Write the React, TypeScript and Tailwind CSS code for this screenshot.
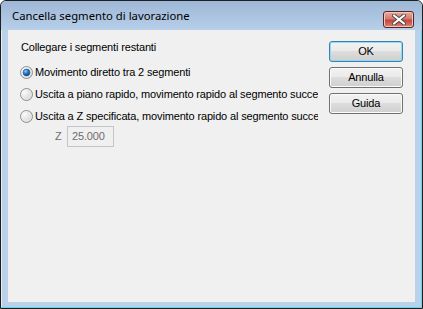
import React from 'react'

const options = [
  { label: 'Movimento diretto tra 2 segmenti', checked: true },
  { label: 'Uscita a piano rapido, movimento rapido al segmento succe', checked: false },
  { label: 'Uscita a Z specificata, movimento rapido al segmento succe', checked: false },
]

function Radio({ checked }: { checked: boolean }) {
  return (
    <svg width="13" height="13" viewBox="0 0 13 13" className="shrink-0">
      <defs>
        <radialGradient id="rfill" cx="0.3" cy="0.3" r="0.8">
          <stop offset="0" stopColor="#fbfbfb" />
          <stop offset="1" stopColor="#d4d4d4" />
        </radialGradient>
        <radialGradient id="rdot" cx="0.35" cy="0.3" r="0.7">
          <stop offset="0" stopColor="#8fd3fb" />
          <stop offset="0.5" stopColor="#2a7dd0" />
          <stop offset="1" stopColor="#0f4a8a" />
        </radialGradient>
      </defs>
      <circle cx="6.5" cy="6.5" r="6" fill="url(#rfill)" stroke="#8e8f8f" strokeWidth="1" />
      <circle cx="6.5" cy="6.5" r="4.6" fill="none" stroke="#ececec" strokeWidth="0.8" />
      {checked && <circle cx="6.5" cy="6.5" r="3.4" fill="url(#rdot)" stroke="#1c4f86" strokeWidth="0.6" />}
    </svg>
  )
}

function DlgButton({ label, primary }: { label: string; primary?: boolean }) {
  return (
    <div
      className={`w-[74px] h-[21px] rounded-[3px] border flex items-center justify-center text-black bg-[linear-gradient(#f2f2f2,#ebebeb_45%,#dddddd_50%,#cfcfcf)] ${
        primary
          ? 'border-[#3c7fb1] shadow-[inset_0_0_0_1px_#8fdcf7]'
          : 'border-[#707070] shadow-[inset_0_0_0_1px_#fbfbfb]'
      }`}
    >
      {label}
    </div>
  )
}

export default function App() {
  return (
    <div className="w-[423px] h-[309px] bg-white">
      <div className="w-[423px] h-[309px] border border-[#1e1e1e] rounded-t-[6px] overflow-hidden flex flex-col bg-[#bad1ea] shadow-[inset_-1px_-1px_0_#5fd7f0,inset_1px_1px_0_#e3edf8]">
        {/* title bar */}
        <div className="h-[29px] shrink-0 flex items-center justify-between pl-[11px] pr-[8px] bg-[linear-gradient(#9db7d6,#b7cfe9)] rounded-t-[5px]">
          <span className="text-[11.3px] text-black font-['Noto_Sans',sans-serif] pt-[2px]">
            Cancella segmento di lavorazione
          </span>
          <div className="w-[31px] h-[17px] mt-[7px] rounded-[3px] border border-[#5b2020] flex items-center justify-center bg-[linear-gradient(#e8aba1,#d47a6d_45%,#c4463a_55%,#d88374)] shadow-[inset_0_0_0_1px_#f2c4bb]">
            <svg width="14" height="11" viewBox="0 0 14 11">
              <path d="M2 1.5 L12 9.5 M12 1.5 L2 9.5" stroke="#4a4a4a" strokeWidth="4" strokeLinecap="round" />
              <path d="M2 1.5 L12 9.5 M12 1.5 L2 9.5" stroke="#ffffff" strokeWidth="2.2" strokeLinecap="round" />
            </svg>
          </div>
        </div>

        {/* client */}
        <div className="flex-1 mx-[7px] mb-[6px] bg-[#f0f0f0] flex text-[11px] text-black font-['Liberation_Sans',sans-serif] tracking-[-0.15px]">
          <div className="flex-1 flex flex-col pl-[12px] pt-[10px] min-w-0">
            <div className="h-[14px] leading-[14px] pl-[1px]">Collegare i segmenti restanti</div>
            <div className="mt-[7px] flex flex-col">
              {options.map((o) => (
                <div key={o.label} className="h-[22px] flex items-center">
                  <Radio checked={o.checked} />
                  <span className="ml-[2px] w-[283px] overflow-hidden whitespace-nowrap">{o.label}</span>
                </div>
              ))}
            </div>
            <div className="-mt-px h-[21px] flex items-center pl-[35px]">
              <span className="w-[12px] text-[#6d6d6d]">Z</span>
              <div className="w-[47px] h-[21px] border border-[#c2c6c9] bg-[#f0f0f0] text-[#6d6d6d] flex items-center pl-[4px]">
                25.000
              </div>
            </div>
          </div>
          <div className="flex flex-col gap-[5px] pt-[11px] pr-[12px]">
            <DlgButton label="OK" primary />
            <DlgButton label="Annulla" />
            <DlgButton label="Guida" />
          </div>
        </div>
      </div>
    </div>
  )
}
